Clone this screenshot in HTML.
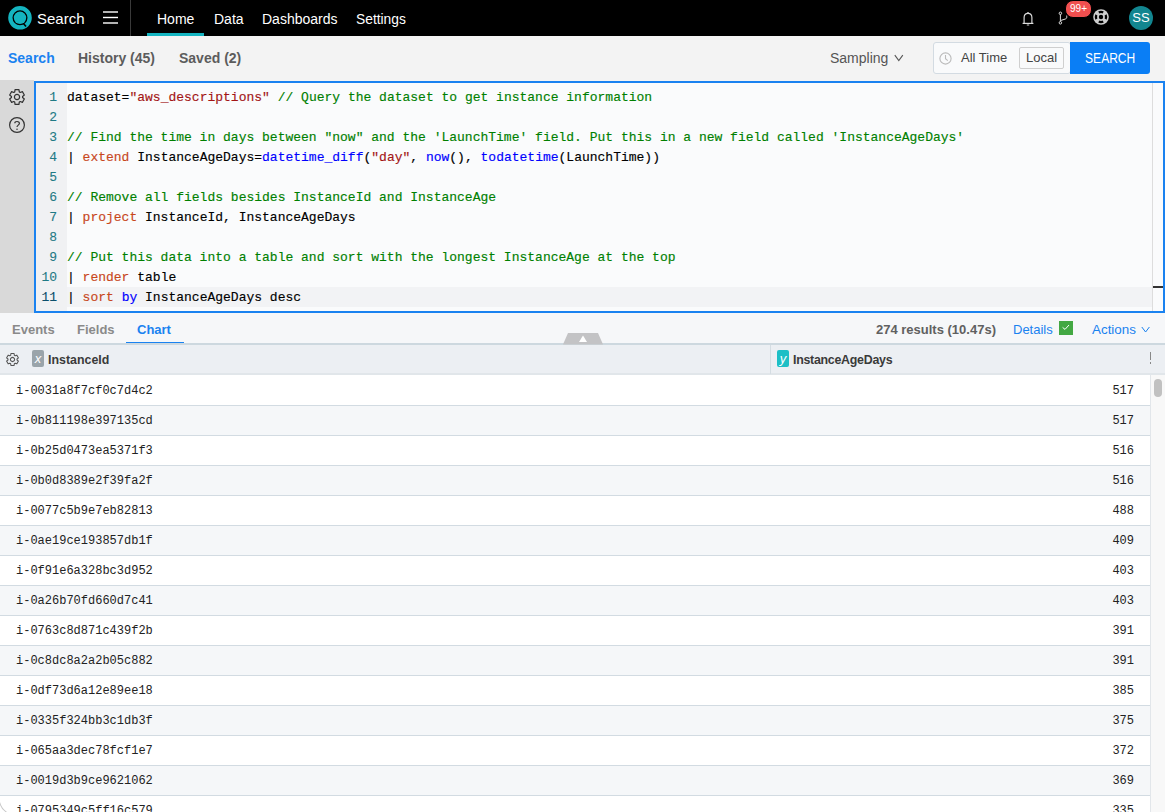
<!DOCTYPE html>
<html><head><meta charset="utf-8">
<style>
*{box-sizing:border-box;margin:0;padding:0}
html,body{width:1165px;height:812px;overflow:hidden;background:#fff;font-family:"Liberation Sans",sans-serif}
.abs{position:absolute}
svg{position:absolute;overflow:visible}
#top{position:absolute;left:0;top:0;width:1165px;height:36px;background:#000}
#sub{position:absolute;left:0;top:36px;width:1165px;height:45px;background:#f3f3f3}
.nav{position:absolute;top:1px;height:36px;line-height:37px;color:#fff;font-size:14px;white-space:nowrap}
.sub{position:absolute;top:36px;height:44px;line-height:44px;font-size:14px;color:#5c5c5c;font-weight:bold;white-space:nowrap}
#gut{position:absolute;left:0;top:80px;width:34px;height:233px;background:#d9d9d9}
#editor{position:absolute;left:34px;top:81px;width:1131px;height:232px;border:2px solid #1a82f0;background:#fafbfc;overflow:hidden}
.ln{position:absolute;left:0;width:21px;text-align:right;font-family:"Liberation Mono",monospace;font-size:13px;color:#1f7a85;height:20px;line-height:20px;-webkit-text-stroke:0.1px}
.ln.act{color:#0b4f6c}
.code{position:absolute;left:31px;font-family:"Liberation Mono",monospace;font-size:13px;color:#000;white-space:pre;height:20px;line-height:20px;-webkit-text-stroke:0.15px}
.c{color:#008000}.s{color:#a31515}.k{color:#c8471c}.f{color:#0000ff}
#tabs{position:absolute;left:0;top:313px;width:1165px;height:30px;background:#f6f7f9}
.tab{position:absolute;top:1px;height:30px;line-height:31px;font-size:13px;font-weight:bold;color:#8a8a8a;white-space:nowrap}
#thead{position:absolute;left:0;top:343px;width:1165px;height:32px;background:#eceff3;border-top:2px solid #cdd8df;border-bottom:2px solid #e1e6ea}
.hd{position:absolute;top:1px;line-height:29px;font-size:12.4px;font-weight:bold;color:#3a3a3a;white-space:nowrap}
.badge{position:absolute;top:5px;width:12px;height:17px;border-radius:2px;color:#fff;font-style:italic;font-size:13px;line-height:17px;text-align:center;font-family:"Liberation Sans",sans-serif}
.row{position:absolute;left:0;width:1150px;height:30px;border-bottom:1px solid #d2dbe2;font-family:"Liberation Mono",monospace;font-size:12px;color:#222}
.row .a{position:absolute;left:16px;top:0;line-height:30px}
.row .b{position:absolute;right:16px;top:0;line-height:30px}
</style></head>
<body>
<div id="top">
  <svg style="left:8px;top:6px" width="24" height="24" viewBox="0 0 24 24">
    <circle cx="12" cy="11.8" r="9.65" fill="none" stroke="#14b4c0" stroke-width="4.3"/>
    <circle cx="12" cy="11.8" r="6.2" fill="#14b4c0"/>
    <path d="M15.5,17.5 L18,20.5" stroke="#000" stroke-width="1.6"/>
  </svg>
  <div class="nav" style="left:37px;font-size:15px;top:0px">Search</div>
  <svg style="left:103px;top:11px" width="16" height="13" viewBox="0 0 16 13">
    <rect x="0" y="0.3" width="15" height="1.4" fill="#fff"/><rect x="0" y="5.8" width="15" height="1.4" fill="#fff"/><rect x="0" y="11.3" width="15" height="1.4" fill="#fff"/>
  </svg>
  <div class="abs" style="left:130px;top:0;width:1px;height:36px;background:#3a3a3a"></div>
  <div class="nav" style="left:157px">Home</div>
  <div class="abs" style="left:147px;top:33px;width:57px;height:3px;background:#14b4c0"></div>
  <div class="nav" style="left:214px">Data</div>
  <div class="nav" style="left:262px">Dashboards</div>
  <div class="nav" style="left:356px;font-size:13.8px">Settings</div>

  <!-- bell -->
  <svg style="left:1022px;top:11px" width="12" height="15" viewBox="0 0 12 15">
    <path d="M2.1,12 L2.1,6.6 C2.1,4.2 3.6,2.4 6,2.4 C8.4,2.4 9.9,4.2 9.9,6.6 L9.9,12" fill="none" stroke="#ddd" stroke-width="1.15"/>
    <path d="M0.6,12.4 L11.4,12.4" stroke="#ddd" stroke-width="1.2"/>
    <path d="M4.8,14 L7.2,14" stroke="#bbb" stroke-width="1.1"/>
    <path d="M4.9,2.6 L6,1.2 L7.1,2.6" fill="none" stroke="#ccc" stroke-width="1"/>
  </svg>
  <!-- branch -->
  <svg style="left:1058px;top:11px" width="12" height="15" viewBox="0 0 12 15">
    <circle cx="2.4" cy="2.3" r="1.25" fill="none" stroke="#ddd" stroke-width="1"/>
    <circle cx="2.4" cy="11.8" r="1.25" fill="none" stroke="#ddd" stroke-width="1"/>
    <path d="M2.4,3.6 L2.4,10.5" stroke="#ddd" stroke-width="1"/>
    <path d="M3,9.4 L7.4,8 C8.8,7.5 9,6.4 8.6,4.6" fill="none" stroke="#ddd" stroke-width="1"/>
  </svg>
  <div class="abs" style="left:1065px;top:0px;width:27px;height:18px;border-radius:8px;border:1px solid #000;background:#f04f4f;color:#fff;font-size:10px;line-height:16px;text-align:center">99+</div>
  <!-- lifebuoy -->
  <svg style="left:1093px;top:9px" width="16" height="16" viewBox="-8 -8 16 16">
    <circle cx="0" cy="0" r="7.8" fill="#cfcfcf"/>
    <circle cx="0" cy="0" r="2.2" fill="#000"/>
    <g fill="#000"><path id="cut" d="M-1.6,-3.6 A3.9,3.9 0 0 1 1.6,-3.6 L2.8,-5.6 A6.3,6.3 0 0 0 -2.8,-5.6Z"/><path d="M-1.6,-3.6 A3.9,3.9 0 0 1 1.6,-3.6 L2.8,-5.6 A6.3,6.3 0 0 0 -2.8,-5.6Z" transform="rotate(90)"/><path d="M-1.6,-3.6 A3.9,3.9 0 0 1 1.6,-3.6 L2.8,-5.6 A6.3,6.3 0 0 0 -2.8,-5.6Z" transform="rotate(180)"/><path d="M-1.6,-3.6 A3.9,3.9 0 0 1 1.6,-3.6 L2.8,-5.6 A6.3,6.3 0 0 0 -2.8,-5.6Z" transform="rotate(270)"/></g>
  </svg>
  <div class="abs" style="left:1129px;top:6px;width:24px;height:24px;border-radius:12px;background:#128690;color:#fff;font-size:13px;line-height:24px;text-align:center">SS</div>
</div>
<div id="sub"></div>
<div class="sub" style="left:8px;color:#1a82f0">Search</div>
<div class="sub" style="left:78px">History (45)</div>
<div class="sub" style="left:179px">Saved (2)</div>
<div class="sub" style="left:830px;font-weight:normal;color:#555">Sampling</div>
<svg style="left:894px;top:54px" width="10" height="8" viewBox="0 0 10 8"><path d="M0.8,1.2 L4.8,6.6 L8.8,1.2" fill="none" stroke="#555" stroke-width="1.1"/></svg>
<div class="abs" style="left:933px;top:42px;width:138px;height:32px;border:1px solid #d3dbe2;border-radius:3px;background:#f9fafb"></div>
<svg style="left:939px;top:52px" width="13" height="13" viewBox="0 0 13 13">
  <circle cx="6.5" cy="6.5" r="5.6" fill="none" stroke="#bbb" stroke-width="1.1"/>
  <path d="M6.5,3 L6.5,6.8 L8.8,8.6" fill="none" stroke="#bbb" stroke-width="1.1"/>
</svg>
<div class="abs" style="left:961px;top:42px;line-height:31px;font-size:13px;color:#444">All Time</div>
<div class="abs" style="left:1019px;top:47px;width:45px;height:22px;border:1px solid #cfcfcf;border-radius:2px;background:#f9fafb;font-size:13px;line-height:20px;text-align:center;color:#444">Local</div>
<div class="abs" style="left:1070px;top:42px;width:80px;height:32px;border-radius:0 3px 3px 0;background:#0a7ef5;color:#fff;font-size:14px;line-height:32px;text-align:center"><span style="display:inline-block;transform:scaleX(0.86)">SEARCH</span></div>

<div id="gut"></div>
<svg style="left:9px;top:89px" width="16" height="16" viewBox="-8 -8 16 16">
  <g transform="rotate(30)"><path d="M5.11,-2.28 L7.34,-1.95 L7.34,1.95 L5.11,2.28 L4.53,3.29 L5.36,5.38 L1.98,7.34 L0.58,5.57 L-0.58,5.57 L-1.98,7.34 L-5.36,5.38 L-4.53,3.29 L-5.11,2.28 L-7.34,1.95 L-7.34,-1.95 L-5.11,-2.28 L-4.53,-3.29 L-5.36,-5.38 L-1.98,-7.34 L-0.58,-5.57 L0.58,-5.57 L1.98,-7.34 L5.36,-5.38 L4.53,-3.29Z" fill="none" stroke="#333" stroke-width="1.2" stroke-linejoin="round"/></g>
  <circle cx="0" cy="0" r="2.6" fill="none" stroke="#333" stroke-width="1.2"/>
</svg>
<svg style="left:9px;top:117px" width="16" height="16" viewBox="-8 -8 16 16">
  <circle cx="0" cy="0" r="7.4" fill="none" stroke="#333" stroke-width="1.2"/>
  <path d="M-2.2,-1.8 C-2.2,-4 2.4,-4.2 2.4,-1.6 C2.4,0 0,0.3 0,2" fill="none" stroke="#333" stroke-width="1.2"/>
  <circle cx="0" cy="4.2" r="0.75" fill="#333"/>
</svg>
<div id="editor">
  <div class="abs" style="left:0;top:0;width:31px;height:228px;background:#f0f1f3"></div>
  <div class="abs" style="left:31px;top:204px;width:1085px;height:20px;background:#f2f3f5"></div>
  <div class="abs" style="left:1116px;top:0;width:1px;height:228px;background:#dddddd"></div>
  <div class="abs" style="left:1117px;top:203px;width:10px;height:2px;background:#333"></div>
<div class="ln" style="top:5px">1</div><div class="code" style="top:5px">dataset=<span class="s">"aws_descriptions"</span> <span class="c">// Query the dataset to get instance information</span></div>
<div class="ln" style="top:25px">2</div>
<div class="ln" style="top:45px">3</div><div class="code" style="top:45px"><span class="c">// Find the time in days between "now" and the 'LaunchTime' field. Put this in a new field called 'InstanceAgeDays'</span></div>
<div class="ln" style="top:65px">4</div><div class="code" style="top:65px">| <span class="k">extend</span> InstanceAgeDays=<span class="f">datetime_diff</span>(<span class="s">"day"</span>, <span class="f">now</span>(), <span class="f">todatetime</span>(LaunchTime))</div>
<div class="ln" style="top:85px">5</div>
<div class="ln" style="top:105px">6</div><div class="code" style="top:105px"><span class="c">// Remove all fields besides InstanceId and InstanceAge</span></div>
<div class="ln" style="top:125px">7</div><div class="code" style="top:125px">| <span class="k">project</span> InstanceId, InstanceAgeDays</div>
<div class="ln" style="top:145px">8</div>
<div class="ln" style="top:165px">9</div><div class="code" style="top:165px"><span class="c">// Put this data into a table and sort with the longest InstanceAge at the top</span></div>
<div class="ln" style="top:185px">10</div><div class="code" style="top:185px">| <span class="k">render</span> table</div>
<div class="ln act" style="top:205px">11</div><div class="code" style="top:205px">| <span class="k">sort</span> <span class="f">by</span> InstanceAgeDays desc</div>

</div>

<div id="tabs">
  <div class="tab" style="left:12px">Events</div>
  <div class="tab" style="left:77px">Fields</div>
  <div class="tab" style="left:137px;color:#1a82f0">Chart</div>
  <div class="abs" style="left:126px;top:29px;width:58px;height:2px;background:#1a82f0"></div>
  <div class="tab" style="left:876px;color:#606060">274 results (10.47s)</div>
  <div class="tab" style="left:1013px;color:#1a82f0;font-weight:normal">Details</div>
  <div class="abs" style="left:1059px;top:8px;width:14px;height:14px;background:#43a843"></div>
  <svg style="left:1059px;top:8px" width="14" height="14" viewBox="0 0 14 14"><path d="M3.6,6.4 L6,8.4 L10,4" fill="none" stroke="#fff" stroke-width="1"/></svg>
  <div class="tab" style="left:1092px;color:#1a82f0;font-weight:normal;font-size:13.4px">Actions</div>
  <svg style="left:1141px;top:13px" width="10" height="8" viewBox="0 0 10 8"><path d="M0.8,1 L4.6,6 L8.4,1" fill="none" stroke="#1a82f0" stroke-width="1"/></svg>
</div>
<div id="thead">
  <svg style="left:6px;top:8px" width="13" height="13" viewBox="-8 -8 16 16">
    <g transform="rotate(30)"><path d="M5.11,-2.28 L7.34,-1.95 L7.34,1.95 L5.11,2.28 L4.53,3.29 L5.36,5.38 L1.98,7.34 L0.58,5.57 L-0.58,5.57 L-1.98,7.34 L-5.36,5.38 L-4.53,3.29 L-5.11,2.28 L-7.34,1.95 L-7.34,-1.95 L-5.11,-2.28 L-4.53,-3.29 L-5.36,-5.38 L-1.98,-7.34 L-0.58,-5.57 L0.58,-5.57 L1.98,-7.34 L5.36,-5.38 L4.53,-3.29Z" fill="none" stroke="#555" stroke-width="1.3" stroke-linejoin="round"/></g>
    <circle cx="0" cy="0" r="2.6" fill="none" stroke="#555" stroke-width="1.3"/>
  </svg>
  <div class="badge" style="left:32px;background:#9aa4aa">x</div>
  <div class="hd" style="left:48px">InstanceId</div>
  <div class="abs" style="left:770px;top:0;width:1px;height:29px;background:#d5dde3"></div>
  <div class="badge" style="left:777px;background:#1dbfc6">y</div>
  <div class="hd" style="left:793px;letter-spacing:-0.27px">InstanceAgeDays</div>
  <div class="abs" style="left:1150px;top:7px;width:1px;height:8px;background:#888"></div>
  <div class="abs" style="left:1150px;top:17px;width:1px;height:2px;background:#888"></div>
</div>
<svg style="left:562px;top:333px" width="42" height="12" viewBox="0 0 42 12">
  <path d="M6,0 L36,0 L41,11.5 L1,11.5Z" fill="#c3c3c5"/>
  <path d="M21,2.5 L25,9 L17,9Z" fill="#fff"/>
</svg>
<div id="rows">
<div class="row" style="top:376px;background:#fff"><span class="a">i-0031a8f7cf0c7d4c2</span><span class="b">517</span></div>
<div class="row" style="top:406px;background:#f5f7f9"><span class="a">i-0b811198e397135cd</span><span class="b">517</span></div>
<div class="row" style="top:436px;background:#fff"><span class="a">i-0b25d0473ea5371f3</span><span class="b">516</span></div>
<div class="row" style="top:466px;background:#f5f7f9"><span class="a">i-0b0d8389e2f39fa2f</span><span class="b">516</span></div>
<div class="row" style="top:496px;background:#fff"><span class="a">i-0077c5b9e7eb82813</span><span class="b">488</span></div>
<div class="row" style="top:526px;background:#f5f7f9"><span class="a">i-0ae19ce193857db1f</span><span class="b">409</span></div>
<div class="row" style="top:556px;background:#fff"><span class="a">i-0f91e6a328bc3d952</span><span class="b">403</span></div>
<div class="row" style="top:586px;background:#f5f7f9"><span class="a">i-0a26b70fd660d7c41</span><span class="b">403</span></div>
<div class="row" style="top:616px;background:#fff"><span class="a">i-0763c8d871c439f2b</span><span class="b">391</span></div>
<div class="row" style="top:646px;background:#f5f7f9"><span class="a">i-0c8dc8a2a2b05c882</span><span class="b">391</span></div>
<div class="row" style="top:676px;background:#fff"><span class="a">i-0df73d6a12e89ee18</span><span class="b">385</span></div>
<div class="row" style="top:706px;background:#f5f7f9"><span class="a">i-0335f324bb3c1db3f</span><span class="b">375</span></div>
<div class="row" style="top:736px;background:#fff"><span class="a">i-065aa3dec78fcf1e7</span><span class="b">372</span></div>
<div class="row" style="top:766px;background:#f5f7f9"><span class="a">i-0019d3b9ce9621062</span><span class="b">369</span></div>
<div class="row" style="top:796px;background:#fff"><span class="a">i-0795349c5ff16c579</span><span class="b">335</span></div>

</div>
<div class="abs" style="left:1150px;top:375px;width:15px;height:437px;background:#f8f8f8;border-left:1px solid #e2e6ea"></div>
<div class="abs" style="left:1154px;top:379px;width:8px;height:18px;border-radius:4px;background:#c1c1c1"></div>
<svg style="left:0;top:800px" width="8" height="12" viewBox="0 0 8 12"><path d="M0,2 Q1.5,8 7,12 L5.5,12 Q1,8.5 0,5Z" fill="#c8c8c8"/></svg>
</body></html>
